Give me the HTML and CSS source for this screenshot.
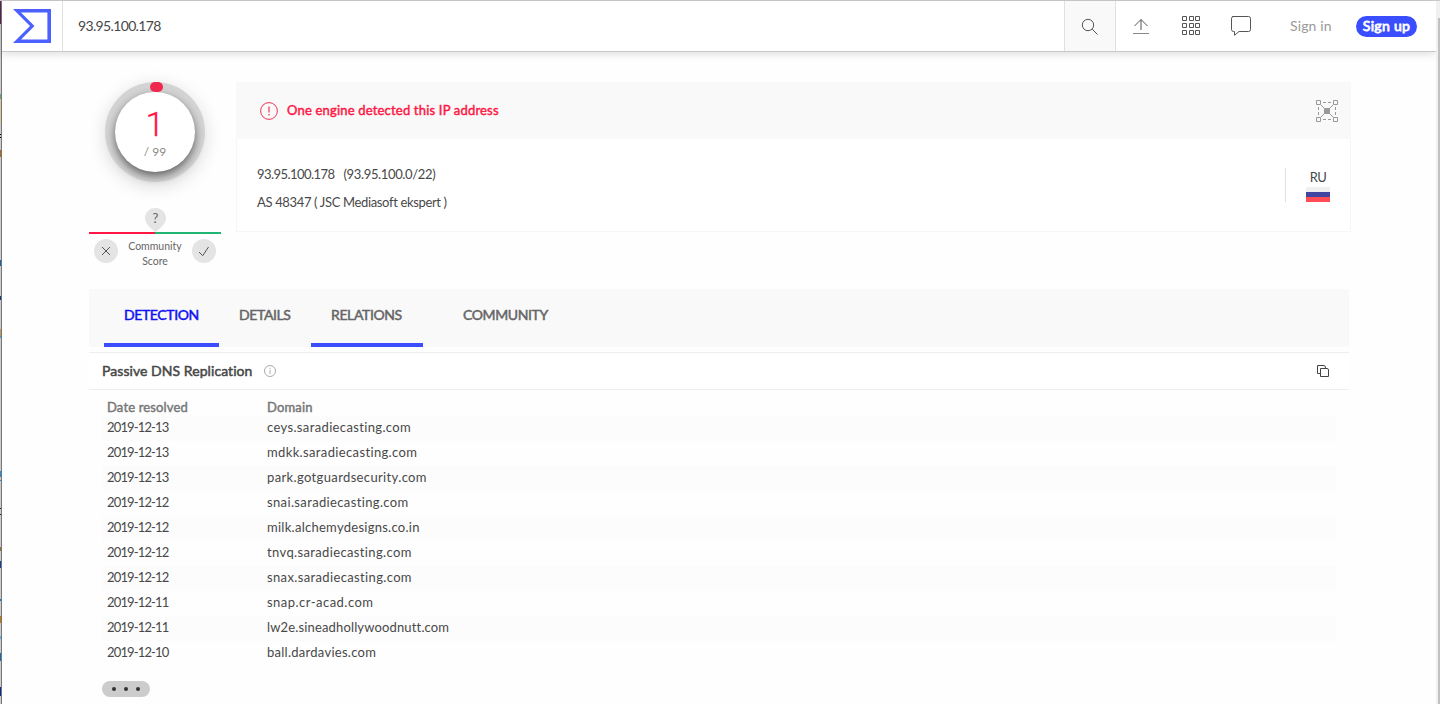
FILE: index.html
```
<!DOCTYPE html>
<html lang="en">
<head>
<meta charset="utf-8">
<title>93.95.100.178</title>
<link rel="stylesheet" href="styles.css">
</head>
<body>
<div class="window">
<div class="edge"></div>
<div class="page">
<header class="topbar">
  <div class="logo"><svg width="38" height="34" viewBox="0 0 38 34"><path fill="#4b61ff" fill-rule="evenodd" d="M0 0H38V34H0L17 17zM8 3.600L21.500 17L8 30.400H34.400V3.600z"/></svg></div>
  <div class="query"><span class="t-query">93.95.100.178</span></div>
  <div class="search"><svg width="18" height="18" viewBox="0 0 18 18" fill="none" stroke="#555"><circle cx="7" cy="7" r="5.700"/><path d="M11.200 11.200L16.500 16.500"/></svg></div>
  <div class="tools">
    <svg class="up" width="16" height="17" viewBox="0 0 16 17" fill="none" stroke="#555"><path d="M8 12V1.500M1.500 8L8 1.500L14.500 8"/><path stroke="#888" d="M0 15.500H16"/></svg>
    <svg class="apps" width="19" height="20" viewBox="0 0 19 20" fill="none" stroke="#555"><path d="M.5.5h4v4h-4zM7.500.5h4v4h-4zM13.500 .5h4v4h-4zM.5 7.500h4v4h-4zM7.500 7.500h4v4h-4zM13.500 7.500h4v4h-4zM.5 14.500h4v4h-4zM7.500 14.500h4v4h-4zM13.500 14.500h4v4h-4z"/></svg>
    <svg class="chat" width="20" height="20" viewBox="0 0 20 20" fill="none" stroke="#555"><path d="M1.500.5h16q2 0 2 2v11q0 2-2 2H8L3.500 19.300V15.500H2.500q-2 0-2-2v-11q0-2 2-2z"/></svg>
    <span class="t-signin">Sign in</span>
    <span class="signup"><span class="t-signup">Sign up</span></span>
  </div>
</header>
<main>
  <section class="summary">
    <div class="score">
      <div class="ring"><i class="arc"></i><div class="disc"><span class="num">1</span><span class="total">/ 99</span></div></div>
      <div class="pin"><svg width="21" height="24" viewBox="0 0 21 24"><path fill="#e4e4e4" d="M10.500 0C16.500 0 21 4.500 21 10.200C21 16 15.500 20 10.500 24C5.500 20 0 16 0 10.200C0 4.500 4.500 0 10.500 0z"/></svg><span class="q">?</span></div>
      <div class="bar"></div>
      <div class="votes">
        <span class="vote"><svg width="10" height="10" viewBox="0 0 10 10" fill="none" stroke="#555"><path d="M1 1L9 9M9 1L1 9"/></svg></span>
        <span class="label">Community<br>Score</span>
        <span class="vote"><svg width="12" height="11" viewBox="0 0 12 11" fill="none" stroke="#555"><path d="M1 6L4.700 9.700L10.500 1"/></svg></span>
      </div>
    </div>
    <div class="card">
      <div class="alert">
        <svg width="18" height="18" viewBox="0 0 18 18" fill="none" stroke="#ef3358"><circle cx="9" cy="9" r="8.400"/><path stroke-width="1.200" d="M9 4.500V10.500M9 12V13.500"/></svg>
        <span class="t-alert">One engine detected this IP address</span>
        <svg class="graph" width="22" height="22" viewBox="0 0 22 22" fill="none" stroke="#999"><path d="M4.500 4.500L17.500 17.500M17.500 4.500L4.500 17.500"/><path fill="#999" stroke="none" d="M8 8h6v6H8z"/><path stroke-dasharray="3 2" d="M7 2.500H16M7 19.500H16M2.500 7V16M19.500 7V16"/><path fill="#f9f9f9" d="M.5.5h4v4h-4zM17.500.5h4v4h-4zM.5 17.500h4v4h-4zM17.500 17.500h4v4h-4z"/></svg>
      </div>
      <div class="info">
        <div class="facts"><div><span class="t-ip">93.95.100.178</span><span class="t-net">(93.95.100.0/22)</span></div><div><span class="t-as">AS 48347 ( JSC Mediasoft ekspert )</span></div></div>
        <div class="country"><span class="t-ru">RU</span><div class="flag"><i></i><i></i><i></i></div></div>
      </div>
    </div>
  </section>
  <nav class="tabs">
    <div class="tab on first"><span>DETECTION</span></div>
    <div class="tab details"><span>DETAILS</span></div>
    <div class="tab on relations"><span>RELATIONS</span></div>
    <div class="tab community"><span>COMMUNITY</span></div>
  </nav>
  <section class="dns">
    <div class="head">
      <span class="t-title">Passive DNS Replication</span>
      <svg width="12" height="12" viewBox="0 0 12 12" fill="none" stroke="#aaa"><circle cx="6" cy="6" r="5.500"/><path d="M6 2.800V4.200M6 5.200V9"/></svg>
      <svg class="copy" width="12" height="12" viewBox="0 0 12 12" fill="none" stroke="#444"><path d="M3 8.500H.5V.5H7Q8.500.5 8.500 3"/><path fill="#fff" d="M3.500 3.500H10Q11.500 3.500 11.500 5V11.500H3.500z"/></svg>
    </div>
    <div class="table">
      <div class="th"><span class="t-date">Date resolved</span><span class="t-domain">Domain</span></div>
      <div class="tr"><span class="date">2019-12-13</span><span class="dom">ceys.saradiecasting.com</span></div>
      <div class="tr"><span class="date">2019-12-13</span><span class="dom">mdkk.saradiecasting.com</span></div>
      <div class="tr"><span class="date">2019-12-13</span><span class="dom">park.gotguardsecurity.com</span></div>
      <div class="tr"><span class="date">2019-12-12</span><span class="dom">snai.saradiecasting.com</span></div>
      <div class="tr"><span class="date">2019-12-12</span><span class="dom mid">milk.alchemydesigns.co.in</span></div>
      <div class="tr"><span class="date">2019-12-12</span><span class="dom">tnvq.saradiecasting.com</span></div>
      <div class="tr"><span class="date">2019-12-12</span><span class="dom">snax.saradiecasting.com</span></div>
      <div class="tr"><span class="date">2019-12-11</span><span class="dom wide">snap.cr-acad.com</span></div>
      <div class="tr"><span class="date">2019-12-11</span><span class="dom tight">lw2e.sineadhollywoodnutt.com</span></div>
      <div class="tr"><span class="date">2019-12-10</span><span class="dom mid">ball.dardavies.com</span></div>
    </div>
    <div class="more"><i></i><i></i><i></i></div>
  </section>
</main>
</div>
<div class="scroll"><div class="thumb"></div></div>
</div>
</body>
</html>
```
FILE: styles.css
```
* { box-sizing: border-box; }
body { margin: 0; height: 704px; overflow: hidden; background: #fefefe; font-family: Lato, "Open Sans", sans-serif; font-size: 13px; color: #484848; font-variant-ligatures: none; }
svg { display: block; flex: none; }
span { white-space: nowrap; }
.window { display: flex; height: 704px; border-top: 1px solid #ccc; }
.edge { width: 2px; flex: none; border-right: 1px solid #777; background: linear-gradient(#61215b 0 23px, #ccc 23px 93px, #6ba77b 93px 98px, #d9c79e 98px 124px, #ccc 124px 133px, #000 133px 134px, #ccc 134px 136px, #000 136px 137px, #ccc 137px 149px, #b36a12 149px 156px, #ccc 156px 259px, #1a65a8 259px 265px, #ccc 265px 295px, #10387e 295px 299px, #ccc 299px 328px, #c49a58 328px 335px, #4c9bdd 335px 337px, #ccc 337px 470px, #268be0 470px 476px, #ccc 476px 479px, #268be0 479px 480px, #ccc 480px 507px, #222 507px 508px, #ccc 508px 513px, #222 513px 514px, #ccc 514px 546px, #94713a 546px 550px, #ccc 550px 560px, #153aa0 560px 567px, #ccc 567px 598px, #1a7bd4 598px 600px, #ccc 600px 615px, #c27410 615px 622px, #ccc 622px 635px, #57b3ef 635px 638px, #ccc 638px 652px, #1769ba 652px 660px, #ccc 660px 686px, #082c91 686px 695px, #ccc 695px); }
.page { flex: 1; min-width: 0; }
.scroll { width: 4px; flex: none; background: #f0f0f0; padding: 17px 0 0 2px; }
.thumb { height: 100%; background: #c1c1c1; }

.topbar { height: 51px; display: flex; background: #fff; border-bottom: 1px solid #c8c8c8; box-shadow: 0 2px 8px rgba(0,0,0,.13); }
.logo { width: 61px; padding: 8px 0 0 11px; border-right: 1px solid #e0e0e0; }
.query { flex: 1; padding-left: 15px; line-height: 50px; font-size: 14px; }
.t-query { letter-spacing: -.65px; }
.search { width: 52px; background: #f9f9f9; border: solid #e0e0e0; border-width: 0 1px; padding: 17px 0 0 16px; }
.tools { width: 320px; display: flex; align-items: flex-start; }
.up { margin: 17px 0 0 17px; }
.apps { margin: 15px 0 0 33px; }
.chat { margin: 15px 0 0 30px; }
.t-signin { margin: 16px 0 0 39px; width: 42px; line-height: 17px; font-size: 14px; color: #999; letter-spacing: .15px; }
.signup { margin: 15px 0 0 24px; width: 61px; height: 21px; border-radius: 11px; background: #3b4eff; color: #fff; text-align: center; font-size: 14px; line-height: 20px; letter-spacing: .3px; -webkit-text-stroke: .8px #fff; }

main { margin: 30px 0 0 87px; width: 1262px; }
.summary { display: flex; height: 207px; }
.score { width: 132px; margin-right: 15px; display: flex; flex-direction: column; }
.ring { position: relative; width: 100px; height: 100px; margin-left: 16px; padding: 10px; border-radius: 50%; background: #d4d4d4; box-shadow: 0 4px 18px rgba(0,0,0,.14); }
.arc { position: absolute; left: 45px; top: 0; width: 13px; height: 10px; border-radius: 5px; background: #f0284e; z-index: 1; }
.disc { width: 80px; height: 80px; border-radius: 50%; background: #fff; box-shadow: 0 4px 10px rgba(0,0,0,.55); display: flex; flex-direction: column; align-items: center; }
.num { margin-top: 16px; font-size: 34px; line-height: 32px; color: #ff1744; font-weight: 300; font-family: Roboto, sans-serif; -webkit-text-stroke: .3px #ff1744; }
.total { margin-top: 4px; line-height: 16px; color: #888; font-size: 12px; }
.pin { position: relative; width: 21px; height: 24px; margin: 26px 0 0 56px; }
.q { position: absolute; left: 0; top: 2px; width: 21px; text-align: center; line-height: 16px; font-size: 13px; color: #666; }
.bar { height: 2px; background: linear-gradient(90deg, #ff1744 50%, #1fb673 50%); }
.votes { display: flex; justify-content: space-between; padding: 5px 5px 0; }
.vote { width: 24px; height: 24px; border-radius: 50%; background: #e4e4e4; display: grid; place-items: center; }
.label { font-size: 10.500px; line-height: 15px; color: #666; text-align: center; }
.card { width: 1115px; height: 150px; background: #fff; }
.alert { height: 57px; background: #f9f9f9; display: flex; align-items: center; padding: 0 13px 0 24px; color: #ff1744; -webkit-text-stroke: .45px #ff1744; }
.t-alert { margin: -2px 0 0 9px; letter-spacing: .19px; }
.graph { margin-left: auto; }
.info { height: 93px; border: 1px solid #f6f6f6; border-top: 0; display: flex; justify-content: space-between; }
.facts { padding: 21px 0 0 20px; line-height: 28px; }
.t-ip { letter-spacing: -.55px; }
.t-net { margin-left: 9px; letter-spacing: -.35px; }
.t-as { letter-spacing: -.35px; }
.country { width: 65px; height: 34px; margin-top: 29px; border-left: 1px solid #e0e0e0; padding-left: 20px; }
.t-ru { display: block; width: 24px; text-align: center; line-height: 19px; letter-spacing: -.5px; }
.flag i { display: block; width: 24px; height: 5px; background: #f0f0f0; }
.flag i + i { background: #4147a0; }
.flag i + i + i { background: #ff4c56; }

.tabs { width: 1260px; height: 58px; background: #f9f9f9; display: flex; padding-left: 15px; font-size: 14px; line-height: 52px; color: #666; -webkit-text-stroke: .5px; letter-spacing: -.38px; }
.tab { height: 58px; }
.on { border-bottom: 4px solid #3b4eff; }
.first { width: 115px; padding-left: 20px; color: #1010f4; }
.details { width: 92px; padding-left: 20px; }
.relations { width: 112px; padding-left: 20px; }
.community { padding-left: 40px; }
.dns { width: 1260px; margin-top: 5px; }
.head { height: 38px; border: solid #eee; border-width: 1px 0; display: flex; align-items: center; padding: 0 20px 0 13px; background: #fff; }
.t-title { width: 150px; margin: -2px 12px 0 0; font-size: 14px; -webkit-text-stroke: .5px; letter-spacing: .06px; }
.copy { margin-left: auto; }
.table { margin: 8px 0 0 13px; width: 1234px; }
.th { display: flex; height: 18px; padding-left: 5px; line-height: 18px; color: #777; -webkit-text-stroke: .45px; letter-spacing: .15px; }
.t-date, .date { display: block; width: 160px; flex: none; }
.date { letter-spacing: -.85px; }
.dom { letter-spacing: .36px; }
.mid { letter-spacing: .27px; }
.wide { letter-spacing: .48px; }
.tight { letter-spacing: .15px; }
.tr { display: flex; height: 25px; padding-left: 5px; line-height: 23px; }
.tr:nth-child(even) { background: #fcfcfc; }
.more { margin: 15px 0 0 13px; width: 48px; height: 16px; border-radius: 8px; background: #ccc; display: flex; align-items: center; justify-content: center; gap: 8px; }
.more i { width: 4px; height: 4px; border-radius: 50%; background: #333; }
```
